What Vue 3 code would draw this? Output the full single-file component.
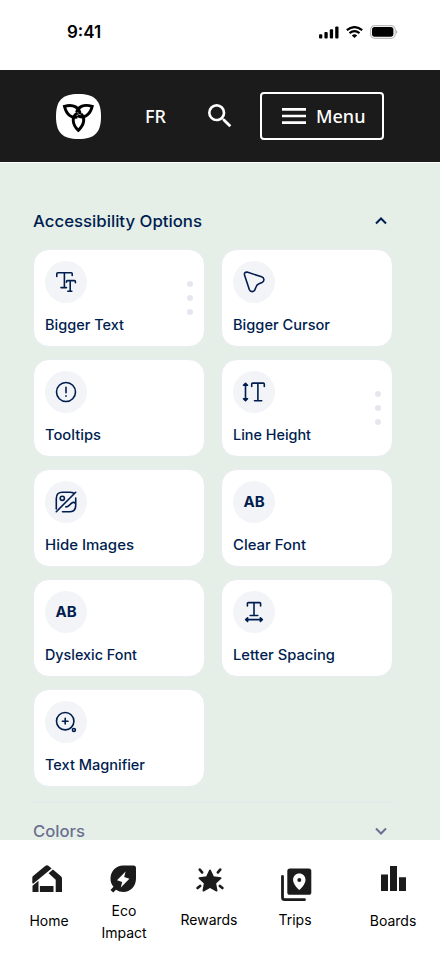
<script setup>
const options = [
  { label: 'Bigger Text', icon: 'text', dots: true, width: 79 },
  { label: 'Bigger Cursor', icon: 'cursor', width: 97 },
  { label: 'Tooltips', icon: 'tip', width: 56 },
  { label: 'Line Height', icon: 'line', dots: true, width: 78 },
  { label: 'Hide Images', icon: 'image', width: 89 },
  { label: 'Clear Font', icon: 'ab', width: 73 },
  { label: 'Dyslexic Font', icon: 'ab', raised: true, width: 92 },
  { label: 'Letter Spacing', icon: 'spacing', width: 102 },
  { label: 'Text Magnifier', icon: 'magnifier', width: 100 },
]
const petals = [0, 120, 240]
</script>

<template>
  <div class="screen">
    <div class="status">
      <span class="time">9:41</span>
      <div class="signals">
        <svg class="bars" viewBox="0 0 20 13"><rect x="0" y="8.3" width="3.3" height="4.3" rx="1" /><rect x="5.4" y="6" width="3.3" height="6.6" rx="1" /><rect x="10.8" y="3.2" width="3.3" height="9.4" rx="1" /><rect x="16.2" y=".4" width="3.3" height="12.2" rx="1" /></svg>
        <svg class="wifi" viewBox="0 0 17 12"><path d="M.8 4.2Q8.5-2 16.2 4.2M3.5 7.1Q8.5 3 13.5 7.1" fill="none" stroke="#000" stroke-width="2.2" /><path d="M5.8 9.4Q8.5 7.3 11.2 9.4L8.5 12Z" /></svg>
        <svg class="battery" viewBox="0 0 28 14"><rect x=".6" y=".6" width="24.6" height="12.8" rx="4.1" fill="none" stroke="#bcbcbc" stroke-width="1.2" /><rect x="2" y="2" width="21.4" height="9.8" rx="2.7" /><path d="M26.2 5v4q1.1-.5 1.1-2t-1.1-2" fill="#aaa" /></svg>
      </div>
    </div>

    <header class="header">
      <svg class="logo" viewBox="0 0 135 135">
        <path d="M67.5 0C116 0 135 19 135 67.5S116 135 67.5 135 0 116 0 67.5 19 0 67.5 0Z" fill="#fff" />
        <g fill="none" stroke="#000" stroke-width="8.8">
          <path v-for="a in petals" :key="a" d="M65 57C47 66 47 90 67 109C87 90 87 70 75 60" :transform="`rotate(${a} 67 61)`" />
        </g>
      </svg>
      <span class="lang">FR</span>
      <svg class="search" viewBox="0 0 24 24"><path fill="#fff" d="M15.5 14h-.79l-.28-.27A6.47 6.47 0 0 0 16 9.5 6.5 6.5 0 1 0 9.5 16c1.61 0 3.09-.59 4.23-1.57l.27.28v.79l5 4.99L20.49 19zm-6 0C7.01 14 5 11.99 5 9.5S7.01 5 9.5 5 14 7.01 14 9.5 11.99 14 9.5 14" /></svg>
      <button class="menu">
        <svg class="burger" viewBox="0 0 24 24"><path fill="#fff" d="M3 18h18v-2H3zm0-5h18v-2H3zm0-7v2h18V6z" /></svg>
        <span>Menu</span>
      </button>
    </header>

    <main class="panel">
      <div class="section">
        <svg class="title" viewBox="0 0 172 24"><text x="0" y="17.5" textLength="169" lengthAdjust="spacingAndGlyphs">Accessibility Options</text></svg>
        <svg class="chevron" viewBox="0 0 12 8"><path d="M1 6.5 6 1.5l5 5" /></svg>
      </div>

      <div class="grid">
        <div v-for="o in options" :key="o.label" class="card">
          <div class="badge">
            <span v-if="o.icon === 'ab'" class="ab" :class="{ raised: o.raised }">AB</span>
            <svg v-else class="glyph" viewBox="0 0 24 24">
              <template v-if="o.icon === 'text'"><path d="M2.8 6.5V3.8q0-1 1-1h13.4q1 0 1 1v1.7M10.4 2.8v14.8M7 17.6h5.5M12.5 12.3v-.7q0-1 1-1h6.9q1 0 1 1v1.2M16.2 10.6v10.7M13.8 21.3h4" /></template>
              <template v-else-if="o.icon === 'cursor'"><path d="M2.5 4.9Q2 2 5 2.1L19.6 6.8C22.4 7.7 22.8 11.2 20 12.5L16.5 14C15 14.6 14.6 15.2 14 17L12.9 19.8C11.9 22.3 8.4 22.3 7.4 19.7Z" /></template>
              <template v-else-if="o.icon === 'tip'"><circle cx="12" cy="12" r="9.5" /><path d="M12 7.4v5.4M12 15.9v.4" /></template>
              <template v-else-if="o.icon === 'line'"><path d="M3.5 3.8v16.4M1.5 5.3l2-2 2 2ZM1.5 18.7l2 2 2-2ZM9.7 6.5V4.1q0-1 1-1h10.6q1 0 1 1v2.4M15.9 3.1v17.7M12.5 20.8h7.2" /></template>
              <template v-else-if="o.icon === 'image'"><path d="M2.3 19V8.5q0-6.2 6.2-6.2h7q3 0 4.8 1.2M21.7 8v7.5q0 6.2-6.2 6.2h-7M2.3 21.7 21.7 2.3M11.8 16.8q1.6.3 3.1-1.2l2.7-2.5q1.9-1.5 4.1.4" /><circle cx="8.3" cy="8.3" r="2.1" /></template>
              <template v-else-if="o.icon === 'spacing'"><path d="M5.4 6V3.6q0-1 1-1h11.2q1 0 1 1V6M12 2.6v12.9M8.2 15.5h7.6M3.8 19.6h16.4M5.6 17.8l-1.9 1.8 1.9 1.8ZM18.4 17.8l1.9 1.8-1.9 1.8Z" /></template>
              <template v-else><circle cx="11.2" cy="11.2" r="8.7" /><path d="M11.2 8.4v5.6M8.4 11.2h5.6" /><circle cx="19.9" cy="20" r="1.5" /></template>
            </svg>
          </div>
          <svg class="label" :viewBox="'0 0 ' + (o.width + 3) + ' 22'" :width="o.width + 3" height="22"><text x="0" y="16" :textLength="o.width" lengthAdjust="spacingAndGlyphs">{{ o.label }}</text></svg>
          <div v-if="o.dots" class="dots"><i /><i /><i /></div>
        </div>
      </div>

      <div class="section muted">
        <svg class="title" viewBox="0 0 172 24"><text x="0" y="17.5" textLength="52" lengthAdjust="spacingAndGlyphs">Colors</text></svg>
        <svg class="chevron" viewBox="0 0 12 8"><path d="m1 1.5 5 5 5-5" /></svg>
      </div>
    </main>

    <nav class="nav">
      <div class="item home">
        <svg viewBox="0 0 30 28"><path d="M.3 18.2V12.8Q.3 11.8 1.1 11.1L13.2 1q1.8-1.3 3.5 0l2.9 2.4L1.4 18.6ZM20.9 4.5 28.9 11.2q1.1 1 1.1 2.3V27H23.7V14.7L16.6 8.2ZM.5 20.8l6-5V27H.5Zm7.4.1h13.6V27H7.9Z" /></svg>
        <span>Home</span>
      </div>
      <div class="item eco">
        <svg viewBox="0 0 26 28"><path d="M13.2.5H23.5q2.5 0 2.5 2.5v10.5C26 21.3 20.3 27 13.5 27q-4.5 0-7.5-2.3L3.2 27.5.5 25l3-3.2Q.5 18.5.5 13.7C.5 6.2 6 .5 13.2.5Z" /><path d="m15.6 6.5-8.6 8.7 5.2 1.8-1.4 5.5 8.6-8.7-5.2-1.8Z" fill="#fff" /></svg>
        <span>Eco<br />Impact</span>
      </div>
      <div class="item rewards">
        <svg viewBox="0 0 28 26"><path d="m14 2.4 3.2 6.7 7.4 1-5.4 5.1 1.4 7.4-6.6-3.6-6.6 3.6 1.4-7.4-5.4-5.1 7.4-1Z" stroke="#1b1b1b" stroke-width="1.8" stroke-linejoin="round" /><path d="m3.8 1.6 2.3 2.8M24.2 1.6l-2.3 2.8M1.6 20l2.5-2.1M26.4 20l-2.5-2.1" stroke="#1b1b1b" stroke-width="2.6" stroke-linecap="round" /></svg>
        <span>Rewards</span>
      </div>
      <div class="item trips">
        <svg viewBox="0 0 31 34"><path d="M1.5 8.5v21q0 2.2 2.2 2.2h19.8" fill="none" stroke="#1b1b1b" stroke-width="2.8" stroke-linecap="round" /><rect x="6.3" y=".5" width="24" height="26.3" rx="2.6" /><path d="M18.3 5.5c-3.5 0-6.2 2.7-6.2 6.2 0 3.9 3 7 6.2 10.4 3.2-3.4 6.2-6.5 6.2-10.4 0-3.5-2.7-6.2-6.2-6.2Z" fill="#fff" /><circle cx="18.3" cy="11.9" r="2" /></svg>
        <span>Trips</span>
      </div>
      <div class="item boards">
        <svg viewBox="0 0 25 25"><path d="M0 8.5h7V25H0ZM9 0h7v25H9Zm9 11.3h7V25h-7Z" /></svg>
        <span>Boards</span>
      </div>
    </nav>
  </div>
</template>

<style>
body { margin: 0; background: #fff; }
</style>

<style scoped>
.screen { width: 440px; height: 956px; overflow: hidden; display: flex; flex-direction: column; background: #fff; font-family: Inter, "Liberation Sans", sans-serif; }
.screen * { box-sizing: border-box; }
svg { display: block; flex: none; }
.status { height: 70px; flex: none; display: flex; justify-content: space-between; padding: 22px 42px 0 67px; }
.time { font-size: 17px; line-height: 20px; font-weight: 600; }
.signals { display: flex; align-items: flex-start; padding-top: 3px; }
.bars { width: 20px; height: 13px; margin: 1px 7px 0 0; }
.wifi { width: 17px; height: 12px; margin: 1px 7px 0 0; }
.battery { width: 28px; height: 14px; }
.header { height: 93px; flex: none; display: flex; align-items: center; padding: 0 56px; background: #1b1b1b; border-bottom: 1px solid #fff; color: #fff; font-family: "Noto Sans", sans-serif; font-size: 18px; }
.logo { width: 45px; height: 45px; margin-top: 1px; }
.lang { width: 59px; margin-left: 44px; line-height: 24px; font-weight: 500; }
.search { width: 32px; height: 32px; }
.menu { width: 124px; height: 48px; margin-left: 24px; padding: 0 0 0 16px; display: flex; align-items: center; gap: 6px; border: 2px solid #fff; border-radius: 4px; background: none; color: #fff; font: 500 18px "Noto Sans", sans-serif; }
.burger { width: 32px; height: 32px; }
.panel { height: 677px; flex: none; padding: 46px 47px 0 33px; overflow: hidden; background: #e5efe7; color: #001d4f; }
.section { display: flex; align-items: center; justify-content: space-between; height: 24px; padding-right: 6px; }
.title { width: 172px; height: 24px; overflow: visible; fill: currentColor; font-size: 16px; font-weight: 500; }
.chevron { width: 12px; height: 8px; fill: none; stroke: currentColor; stroke-width: 2; }
.grid { display: grid; grid-template-columns: 172px 172px; grid-auto-rows: 98px; gap: 12px 16px; margin-top: 16px; }
.card { position: relative; padding: 11px; border: 1px solid #e9ecf1; border-radius: 16px; background: #fff; }
.badge { width: 42px; height: 42px; border-radius: 50%; display: flex; align-items: center; justify-content: center; background: #f3f4f7; }
.glyph { width: 24px; height: 24px; fill: none; stroke: #001d4f; stroke-width: 1.6; stroke-linecap: round; stroke-linejoin: round; }
.ab { font-size: 15px; font-weight: 700; line-height: 20px; }
.ab.raised { margin-top: -1px; }
.label { margin-top: 11px; overflow: visible; fill: currentColor; font-size: 14px; font-weight: 500; }
.dots { position: absolute; right: 11px; top: 31px; display: grid; gap: 8px; }
.dots i { width: 6px; height: 6px; border-radius: 50%; background: #e6e6ef; }
.muted { height: 54px; width: 360px; margin-top: 15px; padding-top: 2px; border-top: 1px solid #e2e8ed; color: #6b7090; }
.nav { height: 116px; flex: none; display: grid; grid-template-columns: 75px 75px 95px 77px 1fr; padding-left: 11.5px; background: #fff; color: #000; font-size: 14px; line-height: 22px; text-align: center; }
.item { display: flex; flex-direction: column; align-items: center; }
.item svg { fill: #1b1b1b; }
.home { padding-top: 25px; }
.home svg { width: 30px; height: 28px; margin: 0 4px 17px 0; }
.eco { padding-top: 25px; }
.eco svg { width: 26px; height: 28px; margin: 0 2px 7px 0; }
.rewards { padding-top: 28px; }
.rewards svg { width: 28px; height: 26px; margin: 0 0 15px 1px; }
.trips { padding-top: 28px; }
.trips svg { width: 31px; height: 34px; margin: 0 0 7px 2px; }
.boards { padding: 26px 0 0 12.5px; }
.boards svg { width: 25px; height: 25px; margin: 0 0 19px 1px; }
</style>
